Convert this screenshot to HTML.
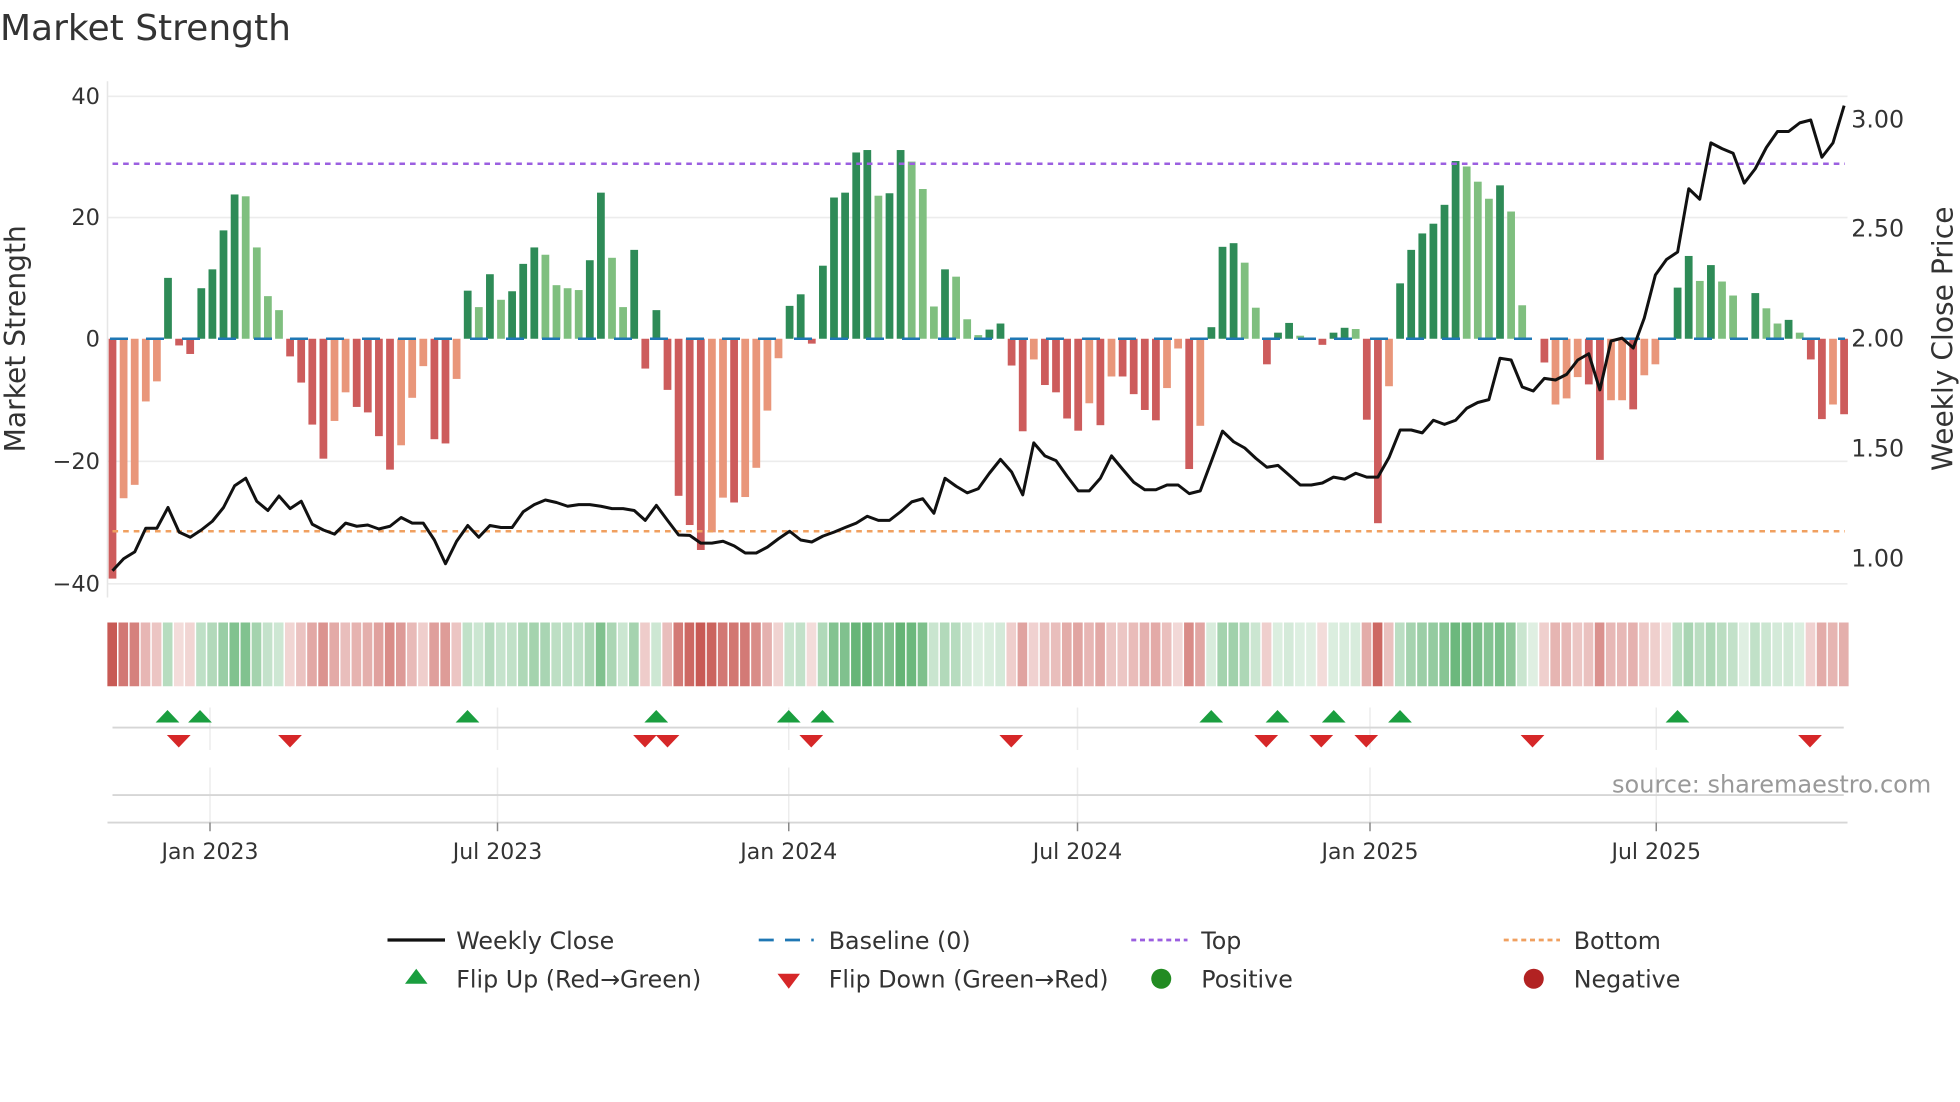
<!DOCTYPE html>
<html><head><meta charset="utf-8">
<style>
html,body{margin:0;padding:0;background:#fff;}
svg{display:block;}
text{font-family:"DejaVu Sans","Liberation Sans",sans-serif;fill:#333;}
</style></head>
<body>
<svg id="s" width="1960" height="1102" viewBox="0 0 1568 881.6" xmlns="http://www.w3.org/2000/svg">
<rect x="0" y="0" width="1568" height="881.6" fill="#fff"/>
<text x="0" y="32" font-size="28.8">Market Strength</text>
<g stroke="#ececec" stroke-width="1.3">
<line x1="86" y1="77" x2="1478" y2="77"/>
<line x1="86" y1="174" x2="1478" y2="174"/>
<line x1="86" y1="369" x2="1478" y2="369"/>
<line x1="86" y1="467" x2="1478" y2="467"/>
</g>
<line x1="86" y1="65" x2="86" y2="478" stroke="#e6e6e6" stroke-width="1.2"/>
<g font-size="18" text-anchor="end">
<text x="80" y="83">40</text>
<text x="80" y="180">20</text>
<text x="80" y="277">0</text>
<text x="80" y="375">−20</text>
<text x="80" y="473">−40</text>
</g>
<g font-size="19">
<text x="1481" y="102">3.00</text>
<text x="1481" y="189">2.50</text>
<text x="1481" y="277">2.00</text>
<text x="1481" y="365">1.50</text>
<text x="1481" y="453">1.00</text>
</g>
<text font-size="22.5" text-anchor="middle" transform="translate(20,271) rotate(-90)">Market Strength</text>
<text font-size="22.5" text-anchor="middle" transform="translate(1562,271) rotate(-90)">Weekly Close Price</text>
<g id="bars"></g>
<line x1="88" y1="271" x2="1476" y2="271" stroke="#1f77b4" stroke-width="2" stroke-dasharray="14.4 14.4"/>
<line x1="90" y1="131" x2="1476" y2="131" stroke="#9b5fe0" stroke-width="2" stroke-dasharray="4.5 4"/>
<line x1="90" y1="425" x2="1476" y2="425" stroke="#f0a060" stroke-width="2" stroke-dasharray="4.5 4"/>
<polyline id="price" fill="none" stroke="#111" stroke-width="2.4" stroke-linejoin="round"/>
<g id="heat"></g>
<g stroke="#ececec" stroke-width="1.2">
<line x1="168" y1="566" x2="168" y2="600"/><line x1="398" y1="566" x2="398" y2="600"/>
<line x1="631" y1="566" x2="631" y2="600"/><line x1="862" y1="566" x2="862" y2="600"/>
<line x1="1096" y1="566" x2="1096" y2="600"/><line x1="1325" y1="566" x2="1325" y2="600"/>
<line x1="168" y1="614" x2="168" y2="658"/><line x1="398" y1="614" x2="398" y2="658"/>
<line x1="631" y1="614" x2="631" y2="658"/><line x1="862" y1="614" x2="862" y2="658"/>
<line x1="1096" y1="614" x2="1096" y2="658"/><line x1="1325" y1="614" x2="1325" y2="658"/>
</g>
<line x1="90" y1="582" x2="1475" y2="582" stroke="#d6d6d6" stroke-width="1.5"/>
<line x1="90" y1="636" x2="1475" y2="636" stroke="#d6d6d6" stroke-width="1.5"/>
<line x1="86" y1="658" x2="1478" y2="658" stroke="#d6d6d6" stroke-width="1.5"/>
<g stroke="#888" stroke-width="1.2">
<line x1="168" y1="658" x2="168" y2="665"/><line x1="398" y1="658" x2="398" y2="665"/>
<line x1="631" y1="658" x2="631" y2="665"/><line x1="862" y1="658" x2="862" y2="665"/>
<line x1="1096" y1="658" x2="1096" y2="665"/><line x1="1325" y1="658" x2="1325" y2="665"/>
</g>
<g font-size="17.6" text-anchor="middle">
<text x="168" y="687">Jan 2023</text><text x="398" y="687">Jul 2023</text>
<text x="631" y="687">Jan 2024</text><text x="862" y="687">Jul 2024</text>
<text x="1096" y="687">Jan 2025</text><text x="1325" y="687">Jul 2025</text>
</g>
<g id="marks"></g>
<text x="1545" y="634" font-size="19.2" text-anchor="end" style="fill:#999">source: sharemaestro.com</text>
<line x1="310" y1="752" x2="356" y2="752" stroke="#111" stroke-width="2.6"/>
<line x1="607" y1="752" x2="651" y2="752" stroke="#1f77b4" stroke-width="2.2" stroke-dasharray="12 9"/>
<line x1="905" y1="752" x2="950" y2="752" stroke="#9b5fe0" stroke-width="2.2" stroke-dasharray="4 3"/>
<line x1="1203" y1="752" x2="1248" y2="752" stroke="#f0a060" stroke-width="2.2" stroke-dasharray="4 3"/>
<polygon points="333,775 342,787 324,787" fill="#1a9e3f"/>
<polygon points="622,779 640,779 631,791" fill="#d62728"/>
<circle cx="929" cy="783" r="8" fill="#228b22"/>
<circle cx="1227" cy="783" r="8" fill="#b22222"/>
<g font-size="19">
<text x="365" y="759">Weekly Close</text><text x="663" y="759">Baseline (0)</text>
<text x="961" y="759">Top</text><text x="1259" y="759">Bottom</text>
<text x="365" y="790">Flip Up (Red→Green)</text><text x="663" y="790">Flip Down (Green→Red)</text>
<text x="961" y="790">Positive</text><text x="1259" y="790">Negative</text>
</g>
</svg>
<script>
var V=[-39.4,-26.2,-24,-10.3,-7,10,-1.1,-2.5,8.3,11.4,17.8,23.7,23.4,15,7,4.7,-2.9,-7.2,-14.1,-19.7,-13.5,-8.8,-11.2,-12.1,-16,-21.5,-17.5,-9.7,-4.5,-16.5,-17.2,-6.6,7.9,5.2,10.6,6.4,7.8,12.3,15,13.8,8.8,8.3,8,12.9,24,13.3,5.2,14.6,-4.9,4.7,-8.4,-25.8,-30.6,-34.7,-31.8,-26.1,-26.9,-26,-21.2,-11.8,-3.2,5.4,7.3,-0.8,12,23.2,24,30.6,31,23.5,23.9,31,29.1,24.6,5.3,11.4,10.2,3.2,0.6,1.5,2.5,-4.4,-15.2,-3.4,-7.6,-8.8,-13.1,-15.1,-10.6,-14.2,-6.2,-6.2,-9.1,-11.7,-13.4,-8.1,-1.6,-21.4,-14.3,1.9,15.1,15.7,12.5,5.1,-4.2,1,2.6,0.5,0,-1,1,1.8,1.6,-13.3,-30.3,-7.8,9.1,14.6,17.3,18.9,22,29.2,28.3,25.8,23,25.2,20.9,5.5,0,-3.9,-10.8,-9.8,-6.3,-7.5,-19.9,-10.1,-10.1,-11.6,-6,-4.2,0,8.4,13.6,9.5,12.1,9.4,7.1,0,7.5,5,2.5,3.1,1,-3.4,-13.2,-10.8,-12.4];
var manual={0:'R',1:'O',2:'O',3:'O',4:'O',5:'D',6:'R',7:'R',8:'D',9:'D',10:'D',11:'D',12:'L',13:'L',14:'L',15:'L',16:'R',17:'R',18:'R',19:'R',20:'O',21:'O',22:'R',23:'R',24:'R',25:'R',26:'O',27:'O',28:'O',29:'R',30:'R',31:'O',32:'D',33:'L',34:'D',35:'L',36:'D',37:'D',38:'D',39:'L',40:'L',41:'L',42:'L',43:'D',44:'D',45:'L',46:'L',47:'D',48:'R',49:'D',50:'R',51:'R',52:'R',53:'R',54:'O',55:'O',56:'R',57:'O',58:'O',59:'O',60:'O',61:'D',62:'D',63:'R',64:'D',65:'D',66:'D',67:'D',68:'D',69:'L',70:'D',71:'D',72:'L',73:'L',74:'L',75:'D',76:'L',77:'L',78:'L',79:'D',80:'D',81:'R',82:'R',83:'O',84:'R',85:'R',86:'R',87:'R',88:'O',89:'R',90:'O',91:'R',92:'R',93:'R',94:'R',95:'O',96:'O',97:'R',98:'O',99:'D',100:'D',101:'D',102:'L',103:'L',104:'R',105:'D',106:'D',107:'L',108:'L',109:'R',110:'D',111:'D',112:'L',113:'R',114:'R',115:'O',116:'D',117:'D',118:'D',119:'D',120:'D',121:'D',122:'L',123:'L',124:'L',125:'D',126:'L',127:'L',128:'L',129:'R',130:'O',131:'O',132:'O',133:'R',134:'R',135:'O',136:'O',137:'R',138:'O',139:'O',140:'O',141:'D',142:'D',143:'L',144:'D',145:'L',146:'L',147:'L',148:'D',149:'L',150:'L',151:'D',152:'L',153:'R',154:'R',155:'O',156:'R'};
var P=[456.6,447,441.5,422.6,422.6,406,425.7,429.8,424,417,406,388.6,382.6,401,408.4,396.8,406.9,401,419.4,424,427.3,418.5,421,420,423.2,421,414,418.5,418.5,432,451,433,420.4,429.8,420.4,422,422,409.4,403.7,400,402,405,403.7,403.7,405,406.9,406.9,408.4,416.3,404.3,416.3,428,428.3,434.5,434.5,433,436.7,442.4,442.4,437.7,431,425,432,433.6,428.9,425.7,422,418.5,413,416.3,416.3,409.4,401.5,399,410.6,382.6,389,394.3,391,378.6,367.5,377.6,395.9,354.3,364.7,368.5,381,392.7,392.7,382.6,364.7,375.4,385.8,391.8,391.8,388,388,394.9,392.7,369,344.9,353.4,358.4,366.6,373.8,372.3,380.1,388,388,386.4,381.7,383.3,378.6,381.7,381.7,366,344,344,346.3,336.2,339.5,336.2,326.6,322,319.7,286.6,288,309.6,312.8,302.7,304,299.5,288,283,311.9,272.8,270.5,278.4,254.5,220,207.6,201.6,151,159.4,114.3,118.9,122.6,146.5,135,118,105.2,105.2,98.3,96,125.8,114.3,84.5];
var col={D:'#2e8b57',L:'#7fbf7f',R:'#cd5c5c',O:'#e9967a'};
var NS='http://www.w3.org/2000/svg';
function el(t,a,p){var e=document.createElementNS(NS,t);for(var k in a)e.setAttribute(k,a[k]);p.appendChild(e);return e;}
var bars=document.getElementById('bars'),heat=document.getElementById('heat'),marks=document.getElementById('marks');
var step=8.88,x0=90,pts=[],last=-1;
for(var i=0;i<V.length;i++){
 var x=x0+i*step,v=V[i],h=Math.abs(v)*4.87,ty=manual[i];
 if(h>0.3){el('rect',{x:(x-3.1).toFixed(2),y:(v>0?271-h:271).toFixed(2),width:6.2,height:h.toFixed(2),fill:col[ty]},bars);}
 var sgn=v>0?1:(v<0?-1:last); if(v!==0) last=sgn;
 var t=Math.min(Math.abs(v)/34,1)*0.75+0.18;
 var f=sgn>0?'rgba(76,168,96,'+t.toFixed(2)+')':'rgba(196,78,72,'+t.toFixed(2)+')';
 el('rect',{x:(x-4.1).toFixed(2),y:498,width:7.7,height:51,fill:f},heat);
 pts.push(x.toFixed(1)+','+P[i]);
}
document.getElementById('price').setAttribute('points',pts.join(' '));
var up=[134,160,374,525,631,658,969,1022,1067,1120,1342],dn=[143,232,516,534,649,809,1013,1057,1093,1226,1448];
up.forEach(function(x){el('polygon',{points:(x-9.5)+',578 '+x+',568 '+(x+9.5)+',578',fill:'#1a9e3f'},marks);});
dn.forEach(function(x){el('polygon',{points:(x-9.5)+',588 '+(x+9.5)+',588 '+x+',598',fill:'#d62728'},marks);});
</script>
</body></html>
